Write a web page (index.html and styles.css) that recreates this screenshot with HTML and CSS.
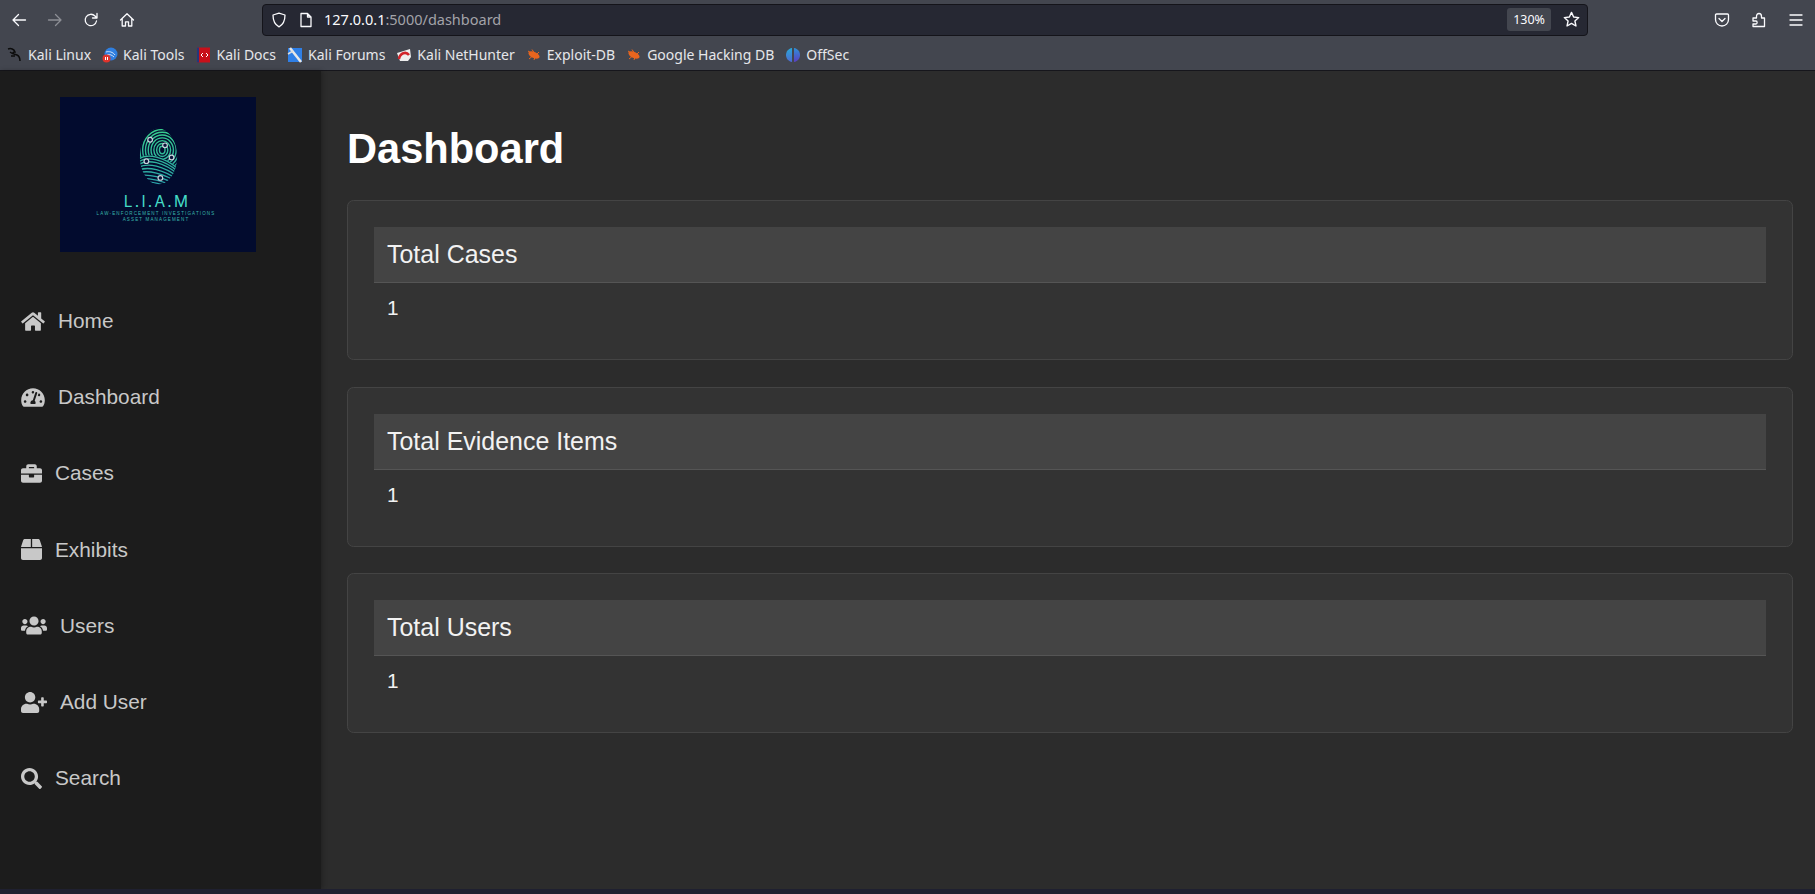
FILE: index.html
```html
<!DOCTYPE html>
<html lang="en">
<head>
    <meta charset="UTF-8" />
    <title>Dashboard</title>
    <link rel="stylesheet" href="styles.css">
</head>
<body>

    <!-- Browser toolbar -->
    <div class="browser-bar">
        <div class="nav-row">
            <div class="nav-buttons">
                <svg class="tool-icon" viewBox="0 0 16 16"><path d="M14.5 8H2M7.5 2.5 2 8l5.5 5.5"/></svg>
                <svg class="tool-icon off" viewBox="0 0 16 16"><path d="M1.5 8H14M8.5 2.5 14 8l-5.5 5.5"/></svg>
                <svg class="tool-icon" viewBox="0 0 16 16"><path d="M13.5 9a5.7 5.7 0 1 1-1.5-5L14 6M14 1.5V6H9.5"/></svg>
                <svg class="tool-icon" viewBox="0 0 16 16"><path d="M1.5 8 8 1.8 14.5 8M3.2 6.8V14h3.3V9.8h3V14h3.3V6.8"/></svg>
            </div>
            <div class="url-bar">
                <svg class="url-icon" viewBox="0 0 16 16"><path d="M8 1.2 14 3c0 5.5-1.5 9.5-6 11.8C3.5 12.5 2 8.5 2 3z"/></svg>
                <svg class="url-icon page" viewBox="0 0 16 16"><path d="M3 1.500h6.500L13 5v9.500H3zM9.500 1.500V5H13"/></svg>
                <span class="url-text">127.0.0.1<span class="url-rest">:5000/dashboard</span></span>
                <span class="zoom-level">130%</span>
                <svg class="url-icon star" viewBox="0 0 16 16"><path d="m8 1.300 2 4.400 4.800.5-3.600 3.200 1 4.700L8 11.700l-4.200 2.400 1-4.700L1.200 6.200 6 5.700z"/></svg>
            </div>
            <div class="nav-extras">
                <svg class="tool-icon" viewBox="0 0 16 16"><path d="M2.500 2h11A1 1 0 0 1 14.500 3v4.500a6.500 6.500 0 0 1-13 0V3a1 1 0 0 1 1-1zM5 6.500l3 3 3-3"/></svg>
                <svg class="tool-icon" viewBox="0 0 16 16"><path d="M2 6h3.500V4.500C5.500 2.500 6.500 1.500 8 1.500s2.500 1 2.500 3V6h3v8.500H2V12h3c1.500 0 1.500-3 0-3H2z"/></svg>
                <svg class="tool-icon" viewBox="0 0 16 16"><path d="M2 3h12M2 8h12M2 13h12"/></svg>
            </div>
        </div>
        <div class="bookmarks">
            <a class="bookmark"><svg viewBox="0 0 16 16"><path class="fav-dragon" d="M1 2c3-1 6 0 7 3-2 0-3 1-1 2l3 1c2 1 3 3 3 6M3 5l3 2M4 9h4"/></svg>Kali Linux</a>
            <a class="bookmark"><svg viewBox="0 0 16 16"><circle cx="9" cy="7" r="6.500" fill="#2f7fe0"/><path d="M4 5c3-1 7 0 9 3M5 8c3-1 5 0 7 2" stroke="#cfe2fa" fill="none"/><circle cx="4.500" cy="11.500" r="4" fill="#e0342c"/><path d="M3.500 10v3M5.500 10v3" stroke="#fff"/></svg>Kali Tools</a>
            <a class="bookmark"><svg viewBox="0 0 16 16"><rect x="1" y="0.500" width="13" height="15" fill="#c8101a"/><rect x="1" y="0.500" width="2" height="15" fill="#26367a"/><path d="M7 6 5 8l2 2M10 6l2 2-2 2" stroke="#fff" fill="none"/></svg>Kali Docs</a>
            <a class="bookmark"><svg viewBox="0 0 16 16"><rect x="1" y="1" width="14" height="14" fill="#2f7fe6"/><path d="M3 1l11 14" stroke="#e8e8e8" stroke-width="2.500"/><path d="M1 7l5-3" stroke="#ddd" stroke-width="1.500"/></svg>Kali Forums</a>
            <a class="bookmark"><svg viewBox="0 0 16 16"><path d="M1 6 14 2l1 8-3 4H4z" fill="#eee"/><path d="M3 12C4 6 10 4 13 8" stroke="#d2232a" stroke-width="2.500" fill="none"/></svg>Kali NetHunter</a>
            <a class="bookmark"><svg viewBox="0 0 16 16"><ellipse class="fav-bug" cx="8" cy="8" rx="6" ry="3" transform="rotate(25 8 8)"/><path class="fav-legs" d="M2 4l3 2M6 2.500l2 3M3 12l3-2.500M8 13l1-3M13 5l-2 2"/></svg>Exploit-DB</a>
            <a class="bookmark"><svg viewBox="0 0 16 16"><ellipse class="fav-bug" cx="8" cy="8" rx="6" ry="3" transform="rotate(25 8 8)"/><path class="fav-legs" d="M2 4l3 2M6 2.500l2 3M3 12l3-2.500M8 13l1-3M13 5l-2 2"/></svg>Google Hacking DB</a>
            <a class="bookmark"><svg viewBox="0 0 16 16"><defs><linearGradient id="secLeft" x1="0" y1="0" x2="0" y2="1"><stop offset="0" stop-color="#29a8d8"/><stop offset="1" stop-color="#4d6ad0"/></linearGradient><linearGradient id="secRight" x1="0" y1="0" x2="0" y2="1"><stop offset="0" stop-color="#2f8fd8"/><stop offset="1" stop-color="#5a3fc0"/></linearGradient></defs><path d="M7 1C3 1.500 1 5 1 8s2 6.500 6 7z" fill="url(#secLeft)"/><path d="M9 1c4 .5 6 4 6 7s-2 6.500-6 7z" fill="url(#secRight)"/></svg>OffSec</a>
        </div>
    </div>

    <div class="app">

        <!-- Sidebar -->
        <nav class="sidebar">
            <div class="logo">
                <svg class="print" viewBox="0 0 44 62">
                    <defs>
                        <linearGradient id="printGrad" gradientUnits="userSpaceOnUse" x1="0" y1="0" x2="0" y2="62">
                            <stop offset="0" stop-color="#36d08c"/>
                            <stop offset="1" stop-color="#2a9fa8"/>
                        </linearGradient>
                        <clipPath id="printClip"><ellipse cx="22" cy="31" rx="20" ry="30"/></clipPath>
                    </defs>
                    <g clip-path="url(#printClip)" fill="none" stroke="url(#printGrad)" stroke-width="1.500">
                        <ellipse cx="26" cy="24" rx="3" ry="4"/>
                        <ellipse cx="26" cy="24" rx="6" ry="7"/>
                        <ellipse cx="26" cy="24" rx="9" ry="10"/>
                        <ellipse cx="26" cy="24" rx="12" ry="13"/>
                        <ellipse cx="26" cy="24" rx="15" ry="16"/>
                        <ellipse cx="26" cy="24" rx="18" ry="19"/>
                        <ellipse cx="26" cy="24" rx="21" ry="22"/>
                        <ellipse cx="26" cy="24" rx="24" ry="25"/>
                        <ellipse cx="26" cy="24" rx="27" ry="28"/>
                        <path class="print-patch" d="M0 33C10 26 28 30 44 44V62H0z"/>
                        <path d="M0 34C10 27 28 31 44 45"/>
                        <path d="M0 37C10 30 28 34 44 48"/>
                        <path d="M0 40C10 33 28 37 44 51"/>
                        <path d="M0 43C10 37 28 41 44 54"/>
                        <path d="M0 46C10 41 28 45 44 57"/>
                        <path d="M0 49C10 45 28 49 44 60"/>
                        <path d="M0 52C10 49 28 53 44 63"/>
                        <path d="M0 55C10 53 28 57 44 66"/>
                        <path d="M0 58C10 57 28 60 44 68"/>
                    </g>
                    <g fill="#0a1238" stroke="#c9d4dc" stroke-width="1.300">
                        <circle cx="13" cy="13" r="2.500"/>
                        <circle cx="29" cy="19" r="2.500"/>
                        <circle cx="36" cy="32" r="2.500"/>
                        <circle cx="9" cy="36" r="2.500"/>
                        <circle cx="24" cy="54" r="2.500"/>
                    </g>
                </svg>
                <div class="logo-title">L.I.A.M</div>
                <div class="logo-sub">LAW-ENFORCEMENT INVESTIGATIONS<br>ASSET MANAGEMENT</div>
            </div>
            <ul class="menu">
                <li><a class="menu-link">
                    <svg class="menu-icon wide" viewBox="0 0 576 512"><path d="M280.400 148.300 96 300.100V464a16 16 0 0 0 16 16l112.100-.3a16 16 0 0 0 15.900-16V368a16 16 0 0 1 16-16h64a16 16 0 0 1 16 16v95.600a16 16 0 0 0 16 16.100L464 480a16 16 0 0 0 16-16V300L295.700 148.300a12.200 12.200 0 0 0-15.300 0zM571.600 251.500 488 182.600V44.100a12 12 0 0 0-12-12h-56a12 12 0 0 0-12 12v72.600L318.500 43a48 48 0 0 0-61 0L4.300 251.500a12 12 0 0 0-1.600 16.900l25.500 31a12 12 0 0 0 16.900 1.600l235.200-193.700a12.200 12.200 0 0 1 15.300 0L530.900 301a12 12 0 0 0 16.900-1.600l25.500-31a12 12 0 0 0-1.700-16.900z"/></svg>
                    Home</a></li>
                <li><a class="menu-link">
                    <svg class="menu-icon wide" viewBox="0 0 576 512"><path d="M288 32C128.900 32 0 160.900 0 320c0 52.800 14.300 102.300 39.100 144.800 5.600 9.600 16.300 15.200 27.400 15.200h443c11.100 0 21.800-5.600 27.400-15.200C561.800 422.300 576 372.800 576 320c0-159.100-128.900-288-288-288zm0 64c14.700 0 26.600 10.100 30.300 23.700-1.100 2.300-2.600 4.200-3.500 6.700l-9.200 27.700c-5.100 3.500-11 6-17.600 6-17.700 0-32-14.300-32-32S270.300 96 288 96zM96 384c-17.700 0-32-14.300-32-32s14.300-32 32-32 32 14.300 32 32-14.300 32-32 32zm48-160c-17.700 0-32-14.300-32-32s14.300-32 32-32 32 14.300 32 32-14.300 32-32 32zm246.800-72.400-61.300 184C343.100 347.300 352 364.500 352 384c0 11.700-3.400 22.600-8.900 32H232.900c-5.500-9.500-8.900-20.300-8.900-32 0-33.900 26.500-61.400 59.900-63.600l61.300-184c4.200-12.600 17.700-19.500 30.400-15.200 12.600 4.200 19.400 17.800 15.200 30.400zm14.700 57.200 15.500-46.600c3.500-1.300 7.100-2.200 11-2.200 17.700 0 32 14.300 32 32s-14.300 32-32 32c-11.400 0-20.900-6.300-26.500-15.200zM480 384c-17.700 0-32-14.300-32-32s14.300-32 32-32 32 14.300 32 32-14.300 32-32 32z"/></svg>
                    Dashboard</a></li>
                <li><a class="menu-link">
                    <svg class="menu-icon" viewBox="0 0 512 512"><path d="M320 336c0 8.840-7.160 16-16 16h-96c-8.840 0-16-7.160-16-16v-48H0v144c0 25.600 22.400 48 48 48h416c25.600 0 48-22.400 48-48V288H320v48zm144-208h-80V80c0-25.600-22.400-48-48-48H176c-25.600 0-48 22.400-48 48v48H48c-25.600 0-48 22.400-48 48v80h512v-80c0-25.600-22.400-48-48-48zm-144 0H192V96h128v32z"/></svg>
                    Cases</a></li>
                <li><a class="menu-link">
                    <svg class="menu-icon" viewBox="0 0 512 512"><path d="M509.500 184.600 458.900 32.800C452.400 13.200 434.100 0 413.400 0H272v192h238.700c-.4-2.500-.4-5-1.200-7.400zM240 0H98.600c-20.700 0-39 13.200-45.500 32.800L2.500 184.600c-.8 2.400-.8 4.900-1.200 7.400H240V0zM0 224v240c0 26.500 21.500 48 48 48h416c26.500 0 48-21.500 48-48V224H0z"/></svg>
                    Exhibits</a></li>
                <li><a class="menu-link">
                    <svg class="menu-icon xwide" viewBox="0 0 640 512"><path d="M96 224c35.300 0 64-28.700 64-64s-28.700-64-64-64-64 28.700-64 64 28.700 64 64 64zm448 0c35.300 0 64-28.700 64-64s-28.700-64-64-64-64 28.700-64 64 28.700 64 64 64zm32 32h-64c-17.600 0-33.500 7.100-45.100 18.600 40.300 22.100 68.900 62 75.100 109.400h66c17.700 0 32-14.300 32-32v-32c0-35.300-28.700-64-64-64zm-256 0c61.900 0 112-50.100 112-112S381.900 32 320 32 208 82.100 208 144s50.100 112 112 112zm76.800 32h-8.300c-20.800 10-43.900 16-68.500 16s-47.600-6-68.500-16h-8.300C179.600 288 128 339.600 128 403.200V432c0 26.500 21.500 48 48 48h288c26.500 0 48-21.500 48-48v-28.800c0-63.600-51.600-115.200-115.200-115.200zm-223.700-13.400C161.500 263.100 145.600 256 128 256H64c-35.300 0-64 28.700-64 64v32c0 17.700 14.300 32 32 32h65.900c6.300-47.400 34.900-87.300 75.200-109.400z"/></svg>
                    Users</a></li>
                <li><a class="menu-link">
                    <svg class="menu-icon xwide" viewBox="0 0 640 512"><path d="M624 208h-64v-64c0-8.800-7.200-16-16-16h-32c-8.800 0-16 7.200-16 16v64h-64c-8.800 0-16 7.200-16 16v32c0 8.800 7.200 16 16 16h64v64c0 8.800 7.200 16 16 16h32c8.800 0 16-7.200 16-16v-64h64c8.800 0 16-7.200 16-16v-32c0-8.800-7.200-16-16-16zm-400 48c70.700 0 128-57.300 128-128S294.700 0 224 0 96 57.300 96 128s57.300 128 128 128zm89.600 32h-16.700c-22.200 10.200-46.900 16-72.900 16s-50.600-5.800-72.900-16h-16.700C60.200 288 0 348.200 0 422.400V464c0 26.500 21.500 48 48 48h352c26.500 0 48-21.500 48-48v-41.600c0-74.200-60.200-134.400-134.400-134.400z"/></svg>
                    Add User</a></li>
                <li><a class="menu-link">
                    <svg class="menu-icon" viewBox="0 0 512 512"><path d="M505 442.700 405.300 343c-4.500-4.500-10.600-7-17-7H372c27.600-35.300 44-79.700 44-128C416 93.100 322.900 0 208 0S0 93.100 0 208s93.100 208 208 208c48.300 0 92.700-16.400 128-44v16.300c0 6.400 2.500 12.500 7 17l99.700 99.700c9.400 9.400 24.600 9.400 33.900 0l28.300-28.300c9.400-9.400 9.400-24.600.1-34zM208 336c-70.700 0-128-57.200-128-128 0-70.700 57.200-128 128-128 70.700 0 128 57.200 128 128 0 70.700-57.200 128-128 128z"/></svg>
                    Search</a></li>
            </ul>
        </nav>

        <!-- Main content -->
        <main class="content">
            <h1>Dashboard</h1>

            <div class="card">
                <div class="card-header">Total Cases</div>
                <div class="card-body">1</div>
            </div>

            <div class="card">
                <div class="card-header">Total Evidence Items</div>
                <div class="card-body">1</div>
            </div>

            <div class="card">
                <div class="card-header">Total Users</div>
                <div class="card-body">1</div>
            </div>
        </main>
    </div>

    <div class="bottom-strip"></div>

</body>
</html>
```

FILE: styles.css
```css
html, body {
  height: 100%;
}
body {
  margin: 0;
  font-family: 'Liberation Sans', Arial, sans-serif;
  background-color: #2c2c2c;
  color: #fff;
  display: flex;
  flex-direction: column;
  overflow: hidden;
}

/* Browser toolbar */
.browser-bar {
  background-color: #43464f;
  border-bottom: 1px solid #16161c;
  font-family: 'Noto Sans', 'Open Sans', sans-serif;
  color: #fbfbfe;
}
.nav-row {
  display: flex;
  align-items: center;
  height: 37px;
  box-sizing: border-box;
  padding: 2px 0 0 11px;
}
.nav-buttons {
  display: flex;
  gap: 20px;
  width: 251px;
}
.tool-icon {
  width: 16px;
  height: 16px;
  fill: none;
  stroke: #fbfbfe;
  stroke-width: 1.3;
  stroke-linecap: round;
  stroke-linejoin: round;
}
.tool-icon.off {
  opacity: 0.4;
}
.url-bar {
  width: 1326px;
  height: 32px;
  box-sizing: border-box;
  display: flex;
  align-items: center;
  background-color: #262833;
  border: 1px solid #14141a;
  border-radius: 4px;
  padding: 0 7px 0 8px;
  font-size: 14.5px;
}
.url-icon {
  width: 16px;
  height: 16px;
  fill: none;
  stroke: #fbfbfe;
  stroke-width: 1.3;
  stroke-linejoin: round;
  margin-right: 6px;
}
.url-icon.page {
  margin: 0 10px 0 5px;
}
.url-icon.star {
  margin: 0;
  width: 17px;
  height: 17px;
}
.url-text {
  flex: 1;
  padding-bottom: 1px;
}
.url-rest {
  color: #a3a3a9;
}
.zoom-level {
  background-color: #43464f;
  border-radius: 3px;
  font-size: 12.5px;
  padding: 3px 6px;
  margin-right: 12px;
}
.nav-extras {
  display: flex;
  gap: 21px;
  margin-left: 126px;
}
.bookmarks {
  display: flex;
  align-items: center;
  height: 33px;
  box-sizing: border-box;
  padding: 2px 0 0 7px;
  gap: 11px;
  font-size: 14px;
}
.bookmark {
  display: flex;
  align-items: center;
  gap: 5px;
  color: #e6e6ea;
}
.bookmark svg {
  width: 16px;
  height: 16px;
}
.fav-dragon {
  fill: none;
  stroke: #0c0c0c;
  stroke-width: 1.5;
}
.fav-bug {
  fill: #e8651e;
}
.fav-legs {
  fill: none;
  stroke: #e8651e;
}

/* Page */
.app {
  flex: 1;
  display: flex;
  min-height: 0;
}
.sidebar {
  width: 321px;
  flex-shrink: 0;
  background-color: #1c1c1c;
  box-shadow: 1px 0 5px rgba(0,0,0,0.3);
  box-sizing: border-box;
  padding-top: 26px;
}
.logo {
  width: 196px;
  height: 155px;
  margin: 0 auto 0 60px;
  background-color: #020b2e;
  text-align: center;
  color: #45dcc6;
  padding-top: 30px;
  box-sizing: border-box;
}
.print {
  display: block;
  width: 41px;
  height: 59px;
  margin: 0 auto;
}
.print-patch {
  fill: #020b2e;
  stroke: none;
}
.logo-title {
  font-family: 'Inter', sans-serif;
  font-size: 15.5px;
  letter-spacing: 2.2px;
  line-height: 18px;
  margin-top: 7px;
  padding-right: 2px;
}
.logo-sub {
  font-size: 4.5px;
  letter-spacing: 1.15px;
  line-height: 6px;
  color: #39b7ad;
  padding-right: 4px;
}
.menu {
  list-style: none;
  margin: 0;
  padding: 31px 0 0 21px;
}
.menu li {
  height: 76.2px;
  display: flex;
  align-items: center;
}
.menu-link {
  display: flex;
  align-items: center;
  gap: 13px;
  font-size: 20.8px;
  color: #c8c8c8;
}
.menu-icon {
  width: 21px;
  height: 21px;
  fill: #c8c8c8;
}
.menu-icon.wide {
  width: 24px;
}
.menu-icon.xwide {
  width: 26px;
}

/* Main */
.content {
  flex: 1;
  padding: 0 22px 0 26px;
  min-width: 0;
}
h1 {
  font-size: 41.6px;
  margin: 0;
  padding: 54px 0 27px;
  line-height: 48px;
}
.card {
  background-color: #333;
  border: 1px solid #444;
  border-radius: 6.5px;
  padding: 26px;
  margin-bottom: 26.5px;
  height: 160px;
  box-sizing: border-box;
}
.card-header {
  background-color: #444;
  border-bottom: 1px solid #555;
  font-size: 24.96px;
  line-height: 29px;
  padding: 13px;
  color: #f2f2f2;
}
.card-body {
  font-size: 20.8px;
  line-height: 24px;
  padding: 13px;
  color: #f2f2f2;
}

.bottom-strip {
  height: 5px;
  background-color: #1f2030;
  flex-shrink: 0;
}
```
